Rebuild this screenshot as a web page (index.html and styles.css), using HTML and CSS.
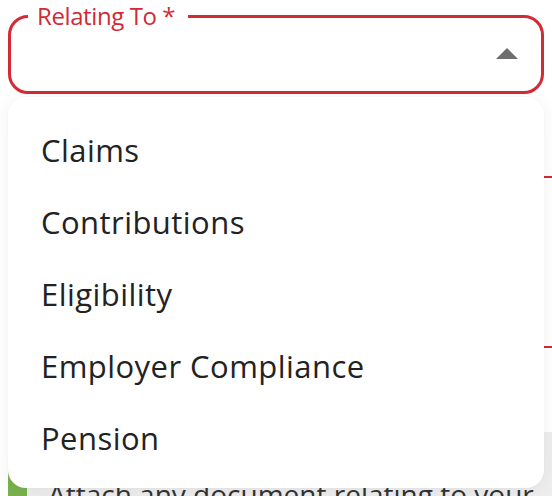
FILE: index.html
```html
<!DOCTYPE html>
<html lang="en">
<head>
<meta charset="utf-8">
<title>Relating To</title>
<link rel="stylesheet" href="styles.css">
</head>
<body>
<div class="page">
  <fieldset class="select-field">
    <legend class="select-label">Relating To *</legend>
    <div class="select-control">
      <span class="arrow-up"></span>
    </div>
  </fieldset>

  <div class="ghost-section first"></div>
  <div class="ghost-section second"></div>

  <div class="upload-note">
    <p>Attach any document relating to your claim.</p>
  </div>

  <ul class="menu">
    <li class="menu-item">Claims</li>
    <li class="menu-item">Contributions</li>
    <li class="menu-item">Eligibility</li>
    <li class="menu-item">Employer Compliance</li>
    <li class="menu-item">Pension</li>
  </ul>
</div>
</body>
</html>
```

FILE: styles.css
```css
html, body {
  margin: 0;
  padding: 0;
  background: #ffffff;
  overflow: hidden;
}

body {
  font-family: "Open Sans", "Noto Sans", sans-serif;
  color: #222222;
  width: 552px;
  height: 496px;
}

.page {
  position: relative;
  padding: 2px 0 0 8px;
  height: 494px;
  overflow: hidden;
}

.select-field {
  margin: 0 8px 0 0;
  padding: 0 23px 0 17px;
  border: 3px solid #d32a36;
  border-radius: 20px;
  height: 92px;
  box-sizing: border-box;
  min-width: 0;
}

.select-label {
  padding: 0 13px 0 9px;
  font-size: 24px;
  line-height: 28px;
  letter-spacing: -0.4px;
  color: #d32a36;
}

.select-control {
  display: flex;
  justify-content: flex-end;
  align-items: flex-start;
  box-sizing: border-box;
  padding-top: 18px;
  height: 58px;
}

.arrow-up {
  width: 0;
  height: 0;
  border-left: 11px solid transparent;
  border-right: 11px solid transparent;
  border-bottom: 11px solid #6e6e6e;
}

.ghost-section {
  width: 620px;
  border-top: 2px solid #d32a36;
  box-sizing: border-box;
}

.ghost-section.first {
  margin-top: 82px;
  height: 170px;
}

.ghost-section.second {
  height: 86px;
}

.upload-note {
  height: 120px;
  background: #eeeeee;
  border-left: 19px solid #78b24d;
  padding: 0 16px 0 21px;
}

.upload-note p {
  margin: 0;
  padding-top: 42px;
  font-size: 28px;
  line-height: 40px;
  color: #333333;
}

.menu {
  position: absolute;
  top: 97px;
  left: 8px;
  width: 536px;
  height: 391px;
  box-sizing: border-box;
  margin: 0;
  padding: 17px 0 14px 0;
  list-style: none;
  background: #ffffff;
  border-radius: 18px;
  box-shadow: 0 4px 20px rgba(0, 0, 0, 0.06), 0 0 2px rgba(0, 0, 0, 0.04);
}

.menu-item {
  padding-left: 33px;
  font-size: 31px;
  line-height: 72px;
  height: 72px;
  letter-spacing: 0.45px;
  color: #222222;
}
```
